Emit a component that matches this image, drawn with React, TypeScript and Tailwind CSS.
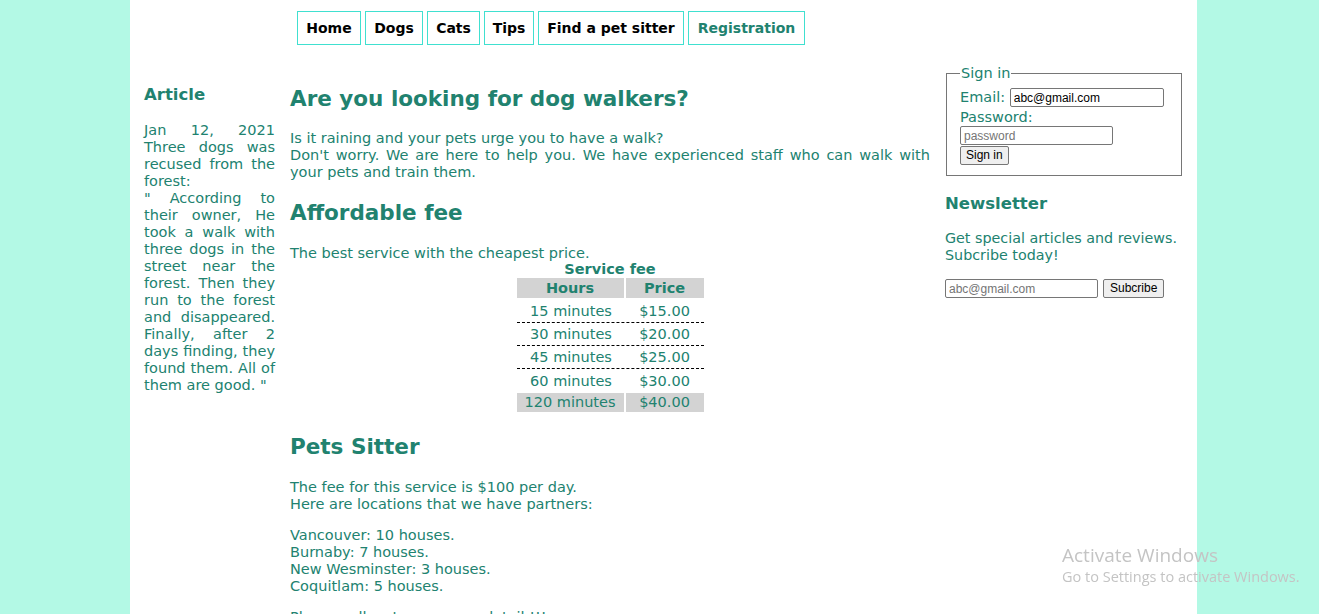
import { useState } from 'react';

const links = [
  { label: 'Home', w: 'w-[64px]' },
  { label: 'Dogs', w: 'w-[58px]' },
  { label: 'Cats', w: 'w-[53px]' },
  { label: 'Tips', w: 'w-[50px]' },
  { label: 'Find a pet sitter', w: 'w-[146px]' },
  { label: 'Registration', w: 'w-[117px]', active: true },
];

const fees = [
  ['15 minutes', '$15.00', 'h-[25px] border-b'],
  ['30 minutes', '$20.00', 'h-[23px] border-b'],
  ['45 minutes', '$25.00', 'h-[23px] border-b'],
  ['60 minutes', '$30.00', 'h-[24px] pb-[3px]'],
];

export default function App() {
  const [email, setEmail] = useState('abc@gmail.com');

  return (
    <div className="min-h-screen bg-[#b3f9e5] font-['DejaVu_Sans',Verdana,sans-serif] text-[14.5px] leading-[17px] text-[#21826f]">
      <div className="ml-[130px] w-[1067px] min-h-[614px] bg-white px-[14px] relative">
        {/* Nav */}
        <nav className="flex gap-[4px] pl-[153px] pt-[11px]">
          {links.map((l) => (
            <a
              key={l.label}
              href="#"
              className={`${l.w} h-[34px] border border-[#40e0d0] flex items-center justify-center font-bold text-[14px] ${l.active ? 'text-[#21826f]' : 'text-black'}`}
            >
              {l.label}
            </a>
          ))}
        </nav>

        <div className="grid grid-cols-[131px_640px_238px] gap-[15px] mt-[27px]">
          {/* Article */}
          <aside className="pt-[13px]">
            <h3 className="font-bold text-[16.5px] leading-[20px]">Article</h3>
            <p className="mt-[17px] text-justify">
              Jan 12, 2021 Three dogs was recused from the forest:
              <br />" According to their owner, He took a walk with three dogs in the street near the forest. Then they run to the forest and disappeared. Finally, after 2 days finding, they found them. All of them are good. "
            </p>
          </aside>

          {/* Main */}
          <main className="pt-[13px]">
            <h1 className="font-bold text-[21.5px] leading-[28px]">Are you looking for dog walkers?</h1>
            <p className="mt-[17px] text-justify">
              Is it raining and your pets urge you to have a walk?
              <br />
              Don't worry. We are here to help you. We have experienced staff who can walk with your pets and train them.
            </p>
            <h2 className="mt-[18px] font-bold text-[21.5px] leading-[28px]">Affordable fee</h2>
            <p className="mt-[18px]">The best service with the cheapest price.</p>
            <table className="mx-auto -mt-[1px] border-separate border-spacing-x-[2px] border-spacing-y-0">
              <caption className="font-bold leading-[17px]">Service fee</caption>
              <thead>
                <tr>
                  <th className="bg-[#d3d3d3] w-[107px] h-[20px] font-bold">Hours</th>
                  <th className="bg-[#d3d3d3] w-[78px] font-bold">Price</th>
                </tr>
              </thead>
              <tbody>
                {fees.map((f) => (
                  <tr key={f[0]}>
                    <td colSpan={2} className="p-0">
                      <div className={`flex items-end pb-[2px] border-dashed border-black ${f[2]}`}>
                        <span className="w-[109px] text-center">{f[0]}</span>
                        <span className="flex-1 text-center">{f[1]}</span>
                      </div>
                    </td>
                  </tr>
                ))}
                <tr>
                  <td className="bg-[#d3d3d3] text-center h-[19px]">120 minutes</td>
                  <td className="bg-[#d3d3d3] text-center">$40.00</td>
                </tr>
              </tbody>
            </table>
            <h2 className="mt-[21px] font-bold text-[21.5px] leading-[28px]">Pets Sitter</h2>
            <p className="mt-[18px]">
              The fee for this service is $100 per day.
              <br />
              Here are locations that we have partners:
            </p>
            <p className="mt-[14px]">
              Vancouver: 10 houses.
              <br />
              Burnaby: 7 houses.
              <br />
              New Wesminster: 3 houses.
              <br />
              Coquitlam: 5 houses.
            </p>
            <p className="mt-[14px]">Please call us to see more detail !!!</p>
          </main>

          {/* Right */}
          <aside>
            <fieldset className="-mt-[7px] border border-[#767676] ml-[1px] w-[236px] px-[13px] pt-[7px] pb-[10px]">
              <legend className="px-[1px] text-[14.5px] leading-[16px]">Sign in</legend>
              <div className="flex items-center text-[14.5px] leading-[17px]">
                <span>Email:&nbsp;</span>
                <input
                  value={email}
                  onChange={(e: React.ChangeEvent<HTMLInputElement>) => setEmail(e.target.value)}
                  className="w-[154px] h-[19px] border border-[#767676] rounded-[2px] px-[3px] font-['Liberation_Sans',Arial,sans-serif] text-[12px] text-black outline-none"
                />
              </div>
              <div className="text-[14.5px] leading-[18px] mt-[1px]">Password:</div>
              <input
                type="password"
                placeholder="password"
                className="block w-[153px] h-[19px] border border-[#767676] rounded-[2px] px-[3px] font-['Liberation_Sans',Arial,sans-serif] text-[12px] text-black placeholder-[#757575] outline-none"
              />
              <button className="mt-[1px] h-[19px] px-[5px] border border-[#767676] rounded-[2px] bg-[#efefef] font-['Liberation_Sans',Arial,sans-serif] text-[12px] leading-[15px] text-black">
                Sign in
              </button>
            </fieldset>
            <h3 className="mt-[18px] font-bold text-[16.5px] leading-[20px]">Newsletter</h3>
            <p className="mt-[16px] text-[14.3px] leading-[17px]">
              Get special articles and reviews.
              <br />
              Subcribe today!
            </p>
            <div className="mt-[15px] flex items-center gap-[5px]">
              <input
                placeholder="abc@gmail.com"
                className="w-[153px] h-[19px] border border-[#767676] rounded-[2px] px-[3px] font-['Liberation_Sans',Arial,sans-serif] text-[12px] text-black placeholder-[#757575] outline-none"
              />
              <button className="h-[19px] px-[6px] border border-[#767676] rounded-[2px] bg-[#efefef] font-['Liberation_Sans',Arial,sans-serif] text-[12px] leading-[15px] text-black">
                Subcribe
              </button>
            </div>
          </aside>
        </div>
      </div>

      {/* OS watermark */}
      <div className="fixed left-[1062px] top-[543px] font-['Open_Sans','Noto_Sans',sans-serif] text-[#c4c4c4] pointer-events-none">
        <div className="text-[19px] leading-[24px]">Activate Windows</div>
        <div className="text-[14.5px] leading-[18px] mt-[1px]">Go to Settings to activate Windows.</div>
      </div>
    </div>
  );
}
